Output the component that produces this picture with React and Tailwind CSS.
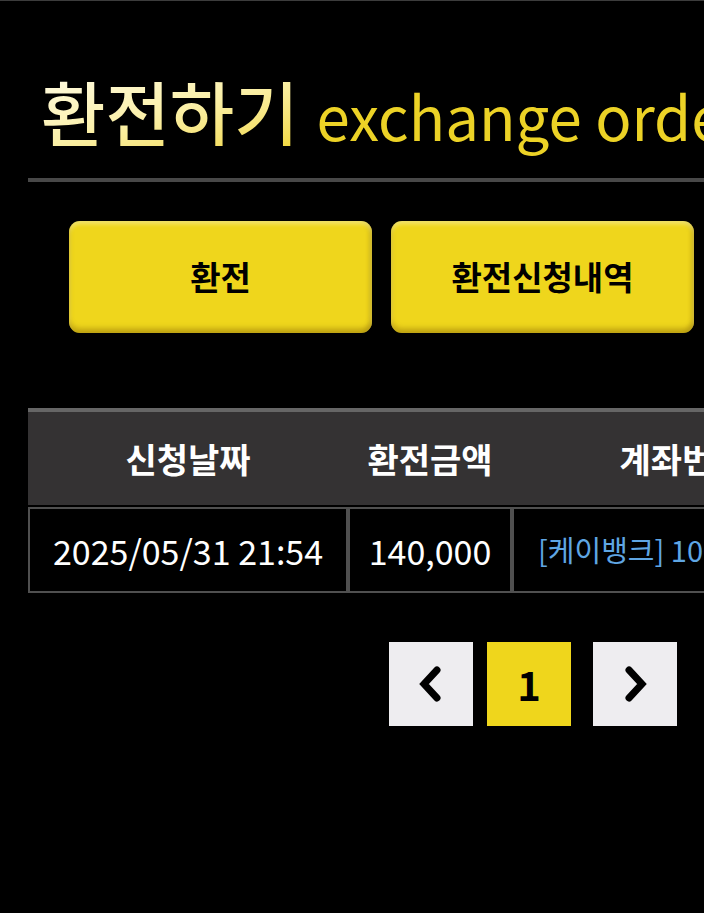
import React from "react";

const cols = [
  { label: "신청날짜", w: "w-[320px]" },
  { label: "환전금액", w: "w-[164px]" },
  { label: "계좌번호", w: "w-[340px]" },
  { label: "상태", w: "w-[186px]" },
];

const ChevronLeft = () => (
  <svg width="26" height="36" viewBox="0 0 26 36" fill="none">
    <path d="M19 4 L6 18 L19 32" stroke="#000" strokeWidth="7" strokeLinecap="round" strokeLinejoin="miter" />
  </svg>
);

const ChevronRight = () => (
  <svg width="26" height="36" viewBox="0 0 26 36" fill="none">
    <path d="M7 4 L20 18 L7 32" stroke="#000" strokeWidth="7" strokeLinecap="round" strokeLinejoin="miter" />
  </svg>
);

const App = () => {
  return (
    <div
      className="w-full min-h-screen bg-black overflow-hidden border-t border-[#3c3c3c]"
      style={{ fontFamily: '"Noto Sans CJK KR", "Noto Sans", sans-serif' }}
    >
      <div className="w-[1066px] px-[28px]">
        {/* === Title === */}
        <div className="pt-[75px] pb-[32px] pl-[13px] border-b-4 border-[#484848] flex items-baseline gap-[18px] leading-none">
          <h2 className="text-[70px] font-medium bg-gradient-to-br from-[#fffbe2] via-[#fbf0a8] to-[#f2d83a] bg-clip-text text-transparent">
            환전하기
          </h2>
          <span className="text-[60px] text-[#ecd226]">exchange order</span>
        </div>

        {/* === Tabs === */}
        <div className="flex gap-[19px] pl-[41px] pt-[39px]">
          {["환전", "환전신청내역"].map((t) => (
            <button
              key={t}
              className="w-[303px] h-[112px] rounded-[11px] bg-[#efd61c] text-black text-[33px] font-bold shadow-[inset_0_-5px_5px_rgba(120,90,0,0.35),inset_0_3px_4px_rgba(255,255,220,0.45),inset_-3px_0_4px_rgba(120,90,0,0.2)]"
            >
              {t}
            </button>
          ))}
        </div>

        {/* === Table === */}
        <div className="mt-[75px]">
          <div className="flex h-[97px] bg-[#343233] border-t-[4px] border-[#666]">
            {cols.map((c) => (
              <div key={c.label} className={`${c.w} flex items-center justify-center text-white text-[34px] font-bold`}>
                {c.label}
              </div>
            ))}
          </div>
          <div className="flex mt-[2px] h-[86px]">
            <div className="w-[320px] border-2 border-[#505050] flex items-center justify-center text-white text-[34px]">
              2025/05/31 21:54
            </div>
            <div className="w-[164px] border-2 border-[#505050] flex items-center justify-center text-white text-[34px]">
              140,000
            </div>
            <div className="w-[340px] border-2 border-[#505050] flex items-center pl-[24px] text-[#5fa6e4] text-[29px] whitespace-nowrap">
              [케이뱅크] 100245781
            </div>
            <div className="w-[186px] border-2 border-[#505050] flex items-center justify-center text-white text-[34px]">
              완료
            </div>
          </div>
        </div>

        {/* === Pagination === */}
        <div className="flex justify-center pt-[49px]">
          <div className="flex items-center">
            <button className="w-[84px] h-[84px] bg-[#eeedf0] flex items-center justify-center">
              <ChevronLeft />
            </button>
            <button className="ml-[14px] w-[84px] h-[84px] bg-[#efd61c] flex items-center justify-center text-black text-[40px] font-bold">
              1
            </button>
            <button className="ml-[22px] w-[84px] h-[84px] bg-[#eeedf0] flex items-center justify-center">
              <ChevronRight />
            </button>
          </div>
        </div>
      </div>
    </div>
  );
};

export default App;
